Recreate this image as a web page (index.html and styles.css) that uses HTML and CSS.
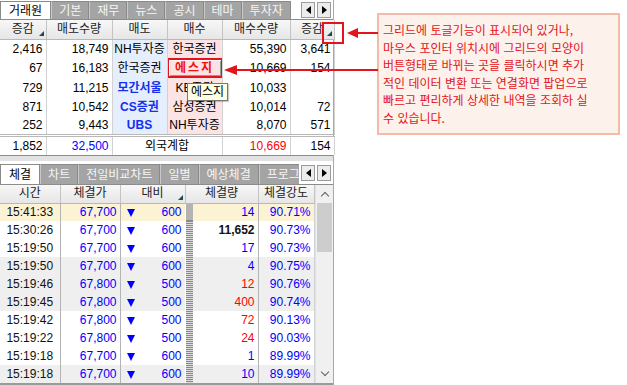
FILE: index.html
```html
<!DOCTYPE html>
<html lang="ko">
<head>
    <meta charset="UTF-8">
    <meta name="viewport" content="width=device-width, initial-scale=1.0">
    <title>거래원 / 체결 - 그리드 토글 안내</title>
    <link rel="stylesheet" href="styles.css">
</head>
<body>

<div class="screen">
    <div class="hts">
        <!-- 거래원 패널 -->
        <section class="panel panel-top">
            <div class="tabbar">
                <div class="tab-list">
                    <span class="tab active">거래원</span>
                    <span class="tab">기본</span>
                    <span class="tab">재무</span>
                    <span class="tab">뉴스</span>
                    <span class="tab">공시</span>
                    <span class="tab">테마</span>
                    <span class="tab">투자자</span>
                </div>
                <div class="tab-arrows">
                    <span class="arrow-btn"><i class="tri-left"></i></span>
                    <span class="arrow-btn"><i class="tri-right"></i></span>
                </div>
            </div>

            <table class="grid broker">
                <colgroup>
                    <col class="w46"><col class="w66"><col class="w55"><col class="w55"><col class="w68"><col class="w44">
                </colgroup>
                <thead>
                    <tr>
                        <th class="sort">증감</th>
                        <th>매도수량</th>
                        <th>매도</th>
                        <th>매수</th>
                        <th>매수수량</th>
                        <th class="sort">증감</th>
                    </tr>
                </thead>
                <tbody>
                    <tr>
                        <td class="num">2,416</td><td class="num">18,749</td>
                        <td class="ask">NH투자증</td><td class="bid">한국증권</td>
                        <td class="num">55,390</td><td class="num">3,641</td>
                    </tr>
                    <tr>
                        <td class="num">67</td><td class="num">16,183</td>
                        <td class="ask">한국증권</td><td class="bid btn-cell"><span class="cell-btn">에스지</span></td>
                        <td class="num">10,669</td><td class="num">154</td>
                    </tr>
                    <tr>
                        <td class="num">729</td><td class="num">11,215</td>
                        <td class="ask foreign">모간서울</td><td class="bid">KB증권</td>
                        <td class="num">10,033</td><td class="num"></td>
                    </tr>
                    <tr>
                        <td class="num">871</td><td class="num">10,542</td>
                        <td class="ask foreign">CS증권</td><td class="bid">삼성증권</td>
                        <td class="num">10,014</td><td class="num">72</td>
                    </tr>
                    <tr>
                        <td class="num">252</td><td class="num">9,443</td>
                        <td class="ask foreign">UBS</td><td class="bid">NH투자증</td>
                        <td class="num">8,070</td><td class="num">571</td>
                    </tr>
                    <tr class="total">
                        <td class="num">1,852</td><td class="num blue">32,500</td>
                        <td colspan="2" class="label">외국계합</td>
                        <td class="num red">10,669</td><td class="num">154</td>
                    </tr>
                </tbody>
            </table>
        </section>

        <div class="splitter"></div>

        <!-- 체결 패널 -->
        <section class="panel panel-bottom">
            <div class="tabbar tall">
                <div class="tab-list">
                    <span class="tab active">체결</span>
                    <span class="tab">차트</span>
                    <span class="tab">전일비교차트</span>
                    <span class="tab">일별</span>
                    <span class="tab">예상체결</span>
                    <span class="tab">프로그램</span>
                </div>
                <div class="tab-arrows">
                    <span class="arrow-btn"><i class="tri-left"></i></span>
                    <span class="arrow-btn"><i class="tri-right"></i></span>
                </div>
            </div>

            <div class="tick-wrap">
                <table class="grid tick">
                    <colgroup>
                        <col class="w60"><col class="w60"><col class="w65"><col class="w8"><col class="w65"><col class="w56">
                    </colgroup>
                    <thead>
                        <tr>
                            <th>시간</th>
                            <th>체결가</th>
                            <th class="sort">대비</th>
                            <th colspan="2">체결량</th>
                            <th>체결강도</th>
                        </tr>
                    </thead>
                    <tbody id="tick-body"></tbody>
                </table>
                <div class="vscroll">
                    <span class="chev up"></span>
                    <span class="thumb"></span>
                    <span class="chev down"></span>
                </div>
            </div>
        </section>
    </div>

    <div class="note-area">
        <div class="callout">
            그리드에 토글기능이 표시되어 있거나,<br>
            마우스 포인터 위치시에 그리드의 모양이<br>
            버튼형태로 바뀌는 곳을 클릭하시면 추가<br>
            적인 데이터 변환 또는 연결화면 팝업으로<br>
            빠르고 편리하게 상세한 내역을 조회하 실<br>
            수 있습니다.
        </div>
    </div>

    <!-- 안내 표시 (화살표, 강조 박스) -->
    <svg class="marks" width="627" height="385" viewBox="0 0 627 385">
        <rect x="323" y="23" width="20" height="20" fill="none" stroke="#e3141b" stroke-width="2"/>
        <line x1="356" y1="33" x2="378" y2="33" stroke="#e3141b" stroke-width="2"/>
        <polygon points="347,33 358,28 358,38" fill="#e3141b"/>
        <line x1="235" y1="70" x2="378" y2="70" stroke="#e3141b" stroke-width="2"/>
        <polygon points="224,70 237,65 237,75" fill="#e3141b"/>
    </svg>
    <div class="tooltip">에스지</div>
</div>

<script>
    const ticks = [
        { time: "15:41:33", price: "67,700", diff: 600, vol: "14", tone: "down", power: "90.71%", band: "hl" },
        { time: "15:30:26", price: "67,700", diff: 600, vol: "11,652", tone: "big", power: "90.73%", band: "" },
        { time: "15:19:50", price: "67,700", diff: 600, vol: "17", tone: "down", power: "90.73%", band: "" },
        { time: "15:19:50", price: "67,700", diff: 600, vol: "4", tone: "down", power: "90.75%", band: "alt" },
        { time: "15:19:46", price: "67,800", diff: 500, vol: "12", tone: "up", power: "90.76%", band: "alt" },
        { time: "15:19:45", price: "67,800", diff: 500, vol: "400", tone: "up", power: "90.74%", band: "alt" },
        { time: "15:19:42", price: "67,800", diff: 500, vol: "72", tone: "up", power: "90.13%", band: "" },
        { time: "15:19:22", price: "67,800", diff: 500, vol: "24", tone: "up", power: "90.03%", band: "" },
        { time: "15:19:18", price: "67,700", diff: 600, vol: "1", tone: "down", power: "89.99%", band: "" },
        { time: "15:19:18", price: "67,700", diff: 600, vol: "10", tone: "down", power: "89.99%", band: "alt" }
    ];

    function renderTicks() {
        const body = document.getElementById("tick-body");
        body.innerHTML = "";

        ticks.forEach((t) => {
            const row = document.createElement("tr");
            row.className = t.band;
            row.innerHTML = `
                <td class="time">${t.time}</td>
                <td class="num blue price">${t.price}</td>
                <td class="num blue diff"><i class="tri-down"></i>${t.diff}</td>
                <td class="bar"></td>
                <td class="num vol ${t.tone}">${t.vol}</td>
                <td class="num blue">${t.power}</td>
            `;
            body.appendChild(row);
        });
    }

    renderTicks();
</script>

</body>
</html>
```

FILE: styles.css
```css
* {
    box-sizing: border-box;
}

body {
    margin: 0;
    background-color: #ffffff;
    font-family: "Liberation Sans", "Noto Sans CJK KR", sans-serif;
    font-size: 12px;
    color: #000;
}

.screen {
    position: relative;
    width: 627px;
    height: 385px;
    display: flex;
    overflow: hidden;
}

.hts {
    width: 334px;
    height: 385px;
    display: flex;
    flex-direction: column;
    border-right: 1px solid #a8a8a8;
}

/* 탭 */
.tabbar {
    display: flex;
    height: 20px;
    border-bottom: 1px solid #8c8c8c;
    background-color: #ffffff;
}

.tabbar.tall {
    height: 24px;
    padding-top: 2px;
}

.tab-list {
    flex: 1;
    display: flex;
    overflow: hidden;
    white-space: nowrap;
}

.tab {
    flex: none;
    padding: 0 7px;
    line-height: 18px;
    color: #f6f6f6;
    background-color: #a4a4a4;
    border: 1px solid #8a8a8a;
    border-left: 1px solid #c9c9c9;
    border-bottom: none;
    margin-top: 1px;
}

.tabbar.tall .tab {
    line-height: 20px;
}

.tab.active {
    background-color: #ffffff;
    color: #000;
    border-color: #8a8a8a;
    margin-bottom: -1px;
    padding: 0 8px;
}

.tab-arrows {
    display: flex;
    gap: 2px;
    padding: 2px 2px 0 2px;
    background-color: #ffffff;
}

.arrow-btn {
    width: 14px;
    height: 16px;
    background-color: #ececec;
    border: 1px solid #9c9c9c;
    display: flex;
    align-items: center;
    justify-content: center;
}

.tri-left,
.tri-right {
    width: 0;
    height: 0;
    border-top: 4px solid transparent;
    border-bottom: 4px solid transparent;
}

.tri-left {
    border-right: 5px solid #000;
}

.tri-right {
    border-left: 5px solid #000;
}

/* 그리드 공통 */
.grid {
    border-collapse: collapse;
    table-layout: fixed;
    width: 100%;
}

.grid th {
    position: relative;
    font-weight: normal;
    color: #222;
    height: 19px;
    padding: 0;
    line-height: 17px;
    text-align: center;
    background: linear-gradient(#f7f7f7, #e6e6e6);
    border-right: 1px solid #c4c4c4;
    border-bottom: 1px solid #b8b8b8;
}

.grid td {
    height: 19px;
    padding: 0 3px;
    line-height: 18px;
    white-space: nowrap;
    overflow: hidden;
    border-right: 1px solid #d2d2d2;
}

.grid th.sort::after {
    content: "";
    position: absolute;
    right: 2px;
    bottom: 3px;
    border-left: 5px solid transparent;
    border-bottom: 5px solid #1d4a55;
}

.num {
    text-align: right;
}

.blue {
    color: #0000ff;
}

.red {
    color: #ff0000;
}

col.w46 { width: 46px; }
col.w66 { width: 66px; }
col.w55 { width: 55px; }
col.w68 { width: 68px; }
col.w44 { width: 44px; }
col.w60 { width: 60px; }
col.w65 { width: 65px; }
col.w8 { width: 8px; }
col.w56 { width: 56px; }

/* 거래원 */
.broker td.ask {
    text-align: center;
    background-color: #e4eefc;
    padding: 0;
}

.broker td.bid {
    text-align: center;
    background-color: #fce4e4;
    padding: 0;
}

.broker td.foreign {
    color: #1430f0;
    font-weight: bold;
}

.cell-btn {
    display: block;
    height: 20px;
    margin: 0 -1px;
    line-height: 14px;
    color: #f01010;
    font-weight: bold;
    letter-spacing: 2px;
    background-color: #fde2e2;
    border: 2px solid #e3141b;
    box-shadow: inset 1px 1px 0 #ffffff, inset -1px -1px 0 #9a9a9a;
    padding-top: 1px;
}

.broker tr.total td {
    height: 18px;
    border-top: 3px double #b8b8b8;
    background-color: #ffffff;
}

.broker td.label {
    text-align: center;
    padding: 0;
}

.splitter {
    height: 9px;
    border-top: 1px solid #8c8c8c;
    background-color: #e2e2e2;
}

/* 체결 */
.tick-wrap {
    display: flex;
    border-bottom: 2px solid #9a9a9a;
}

.tick {
    width: 314px;
}

.tick th {
    height: 18px;
}

.tick td {
    height: 18px;
    line-height: 17px;
}

.tick td.time {
    color: #111;
    text-align: center;
    padding: 0;
    border-right: 1px solid #b4b4b4;
}

.tick td.price {
    border-right: 1px solid #b4b4b4;
}

.tick td.diff {
    border-right: none;
    padding-left: 6px;
}

.tri-down {
    float: left;
    margin-top: 5px;
    width: 0;
    height: 0;
    border-left: 4px solid transparent;
    border-right: 4px solid transparent;
    border-top: 8px solid #0000ff;
}

.tick td.vol {
    border-right: 1px solid #b4b4b4;
}

.tick td.up {
    color: #ff0000;
}

.tick td.down {
    color: #0000ff;
}

.tick td.big {
    color: #111;
    font-weight: bold;
}

.tick tr.hl td {
    background-color: #fcf2d4;
}

.tick tr.alt td {
    background-color: #efefef;
}

.tick tr td.bar {
    padding: 0;
    border-right: none;
    border-left: 1px solid transparent;
    background: repeating-linear-gradient(#8a8a8a 0 1px, #dcdcdc 1px 2px);
}

.vscroll {
    position: relative;
    width: 19px;
    background-color: #f0f0f0;
    border-left: 1px solid #e2e2e2;
}

.chev {
    position: absolute;
    left: 6px;
    width: 6px;
    height: 6px;
    border-left: 1.5px solid #606060;
    border-top: 1.5px solid #606060;
}

.chev.up {
    top: 8px;
    transform: rotate(45deg);
}

.chev.down {
    bottom: 8px;
    transform: rotate(225deg);
}

.thumb {
    position: absolute;
    left: 1px;
    right: 1px;
    top: 18px;
    height: 49px;
    background-color: #cdcdcd;
}

/* 안내 박스 */
.note-area {
    flex: 1;
    padding: 13px 6px 0 43px;
}

.callout {
    width: 243px;
    height: 122px;
    padding: 6px 0 0 4px;
    font-family: "Noto Sans CJK KR", sans-serif;
    font-size: 12px;
    line-height: 17.6px;
    color: #e3141b;
    background-color: #fdf1ec;
    border: 2px solid #f3bca9;
    white-space: nowrap;
}

.marks {
    position: absolute;
    top: 0;
    left: 0;
    pointer-events: none;
}

.tooltip {
    position: absolute;
    left: 187px;
    top: 83px;
    width: 41px;
    height: 18px;
    line-height: 16px;
    text-align: center;
    background-color: #ffffe1;
    border: 1px solid #767676;
    color: #000;
    box-shadow: 1px 1px 1px rgba(0, 0, 0, 0.2);
}
```
